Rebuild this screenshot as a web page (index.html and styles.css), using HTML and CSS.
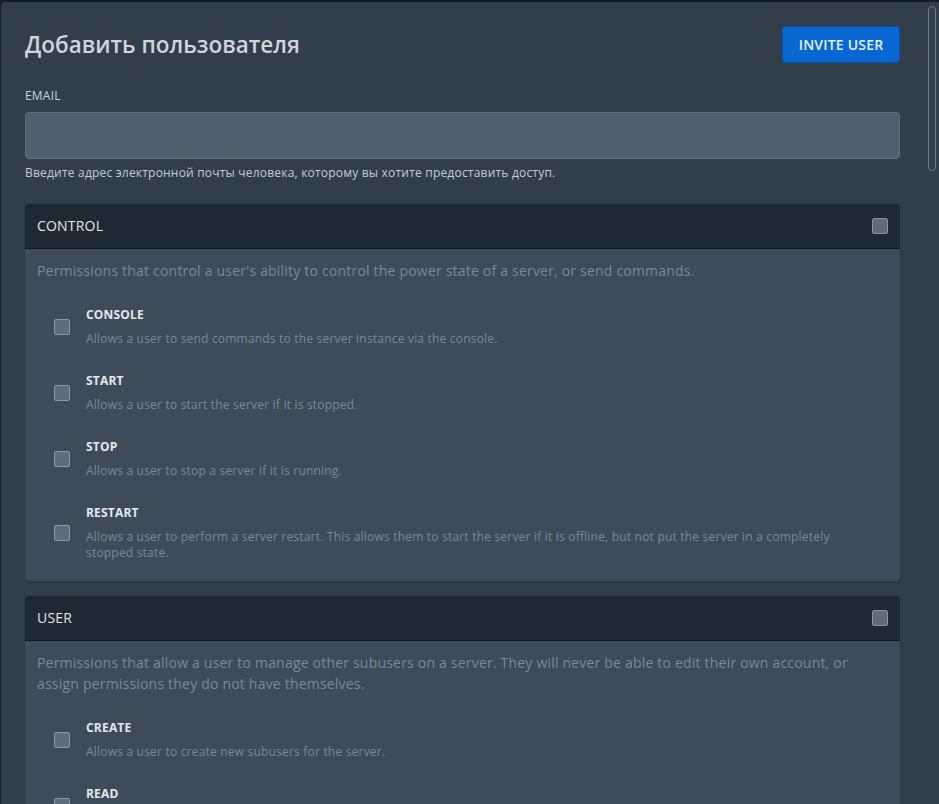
FILE: index.html
```html
<!DOCTYPE html>
<html lang="ru">
<head>
<meta charset="utf-8">
<title>Добавить пользователя</title>
<link rel="stylesheet" href="styles.css">
</head>
<body>
<div class="modal">
  <div class="scroll-thumb"></div>
  <div class="head">
    <h2 class="title">Добавить пользователя</h2>
    <button class="btn-primary" type="button">Invite User</button>
  </div>
  <label class="label" for="email">Email</label>
  <input class="input" id="email" type="text">
  <p class="helper">Введите адрес электронной почты человека, которому вы хотите предоставить доступ.</p>

  <section class="card">
    <div class="card-head">
      <span class="card-title">CONTROL</span>
      <input class="cb" type="checkbox">
    </div>
    <div class="card-body">
      <p class="card-desc">Permissions that control a user's ability to control the power state of a server, or send commands.</p>
      <div class="perm">
        <input class="cb" type="checkbox">
        <div class="perm-text">
          <div class="perm-title">CONSOLE</div>
          <div class="perm-desc">Allows a user to send commands to the server instance via the console.</div>
        </div>
      </div>
      <div class="perm">
        <input class="cb" type="checkbox">
        <div class="perm-text">
          <div class="perm-title">START</div>
          <div class="perm-desc">Allows a user to start the server if it is stopped.</div>
        </div>
      </div>
      <div class="perm">
        <input class="cb" type="checkbox">
        <div class="perm-text">
          <div class="perm-title">STOP</div>
          <div class="perm-desc">Allows a user to stop a server if it is running.</div>
        </div>
      </div>
      <div class="perm">
        <input class="cb" type="checkbox">
        <div class="perm-text">
          <div class="perm-title">RESTART</div>
          <div class="perm-desc">Allows a user to perform a server restart. This allows them to start the server if it is offline, but not put the server in a completely stopped state.</div>
        </div>
      </div>
    </div>
  </section>

  <section class="card">
    <div class="card-head">
      <span class="card-title">USER</span>
      <input class="cb" type="checkbox">
    </div>
    <div class="card-body">
      <p class="card-desc">Permissions that allow a user to manage other subusers on a server. They will never be able to edit their own account, or assign permissions they do not have themselves.</p>
      <div class="perm">
        <input class="cb" type="checkbox">
        <div class="perm-text">
          <div class="perm-title">CREATE</div>
          <div class="perm-desc">Allows a user to create new subusers for the server.</div>
        </div>
      </div>
      <div class="perm">
        <input class="cb" type="checkbox">
        <div class="perm-text">
          <div class="perm-title">READ</div>
          <div class="perm-desc">Allows a user to view subusers and their permissions for the server.</div>
        </div>
      </div>
    </div>
  </section>
</div>
</body>
</html>
```
FILE: styles.css
```css
* { box-sizing: border-box; }
html, body { height: 100%; }
body {
  margin: 0;
  background: #181d23;
  font-family: "Open Sans", "Noto Sans", sans-serif;
  letter-spacing: 0.2px;
  overflow: hidden;
}
.modal {
  position: relative;
  margin: 2px 0 0 1px;
  height: calc(100% - 2px);
  background: #323f4b;
  border-top-left-radius: 4px;
  padding: 24px 39px 0 24px;
  overflow: hidden;
}
.scroll-thumb {
  position: absolute;
  top: 4px;
  right: 3px;
  width: 8px;
  height: 165px;
  border: 1px solid #6b7a89;
  border-radius: 4px;
}
.head {
  display: flex;
  align-items: center;
  justify-content: space-between;
}
.title {
  margin: 0;
  font-family: "Open Sans", sans-serif;
  font-weight: 600;
  font-size: 22.5px;
  letter-spacing: 0;
  color: #cfd5db;
}
.btn-primary {
  width: 118px;
  height: 37px;
  background: #0967d2;
  border: 1px solid #0552b5;
  border-radius: 3px;
  color: #e6f0fb;
  font-family: "Open Sans", sans-serif;
  font-weight: 600;
  font-size: 14px;
  letter-spacing: 0.2px;
  text-transform: uppercase;
  padding: 0;
}
.label {
  display: block;
  margin-top: 25px;
  font-size: 12px;
  line-height: 16px;
  text-transform: uppercase;
  color: #cbd2d9;
}
.input {
  display: block;
  width: 100%;
  height: 47px;
  margin-top: 8px;
  background: #52606d;
  border: 1px solid #616e7c;
  border-radius: 4px;
}
.helper {
  margin: 6px 0 0;
  font-size: 12px;
  line-height: 16px;
  color: #c3cad2;
}
.card {
  margin-top: 23px;
  border-radius: 4px;
  overflow: hidden;
  box-shadow: 0 1px 3px rgba(0,0,0,0.15);
}
.card + .card { margin-top: 15px; }
.card-head {
  display: flex;
  align-items: center;
  justify-content: space-between;
  height: 45px;
  padding: 0 12px 1px;
  background: #1f2933;
  border-bottom: 1px solid #121820;
}
.card-title {
  font-size: 14px;
  color: #e4e7eb;
}
.card-head .cb { margin-top: 1px; }
.card-body {
  background: #3e4c59;
  padding: 11px 12px 7px;
}
.card-desc {
  margin: 0 0 13px;
  font-size: 14px;
  line-height: 21px;
  color: #7b8794;
}
.perm {
  display: flex;
  align-items: center;
  gap: 16px;
  padding: 13px 17px;
}
.perm-title {
  font-size: 12px;
  line-height: 16px;
  font-weight: 700;
  color: #e4e7eb;
}
.perm-desc {
  margin-top: 8px;
  font-size: 12px;
  line-height: 16px;
  color: #7b8794;
}
.cb {
  appearance: none;
  -webkit-appearance: none;
  flex: none;
  width: 16px;
  height: 16px;
  margin: 0;
  background: #5f6c79;
  border: 1px solid #8a96a2;
  border-radius: 2px;
}
```
